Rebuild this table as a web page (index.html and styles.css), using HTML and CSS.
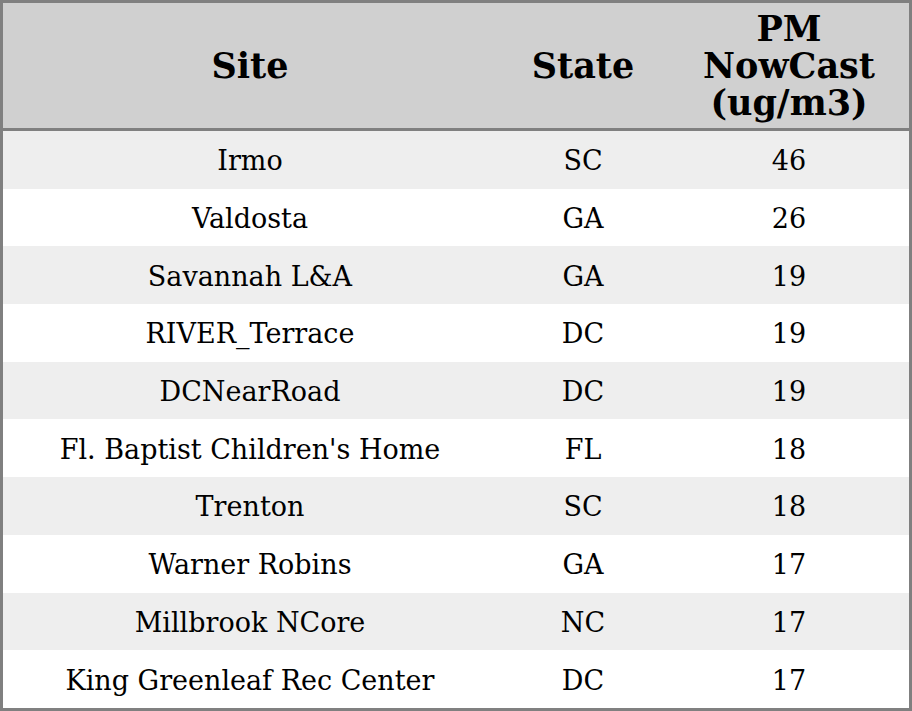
FILE: index.html
```html
<!DOCTYPE html>
<html>
<head>
<meta charset="utf-8">
<link rel="stylesheet" href="styles.css">
</head>
<body>
<table class="aq-table">
  <thead>
    <tr>
      <th class="col-site">Site</th>
      <th class="col-state">State</th>
      <th class="col-pm">PM<br>NowCast<br>(ug/m3)</th>
    </tr>
  </thead>
  <tbody>
    <tr><td>Irmo</td><td>SC</td><td>46</td></tr>
    <tr><td>Valdosta</td><td>GA</td><td>26</td></tr>
    <tr><td>Savannah L&amp;A</td><td>GA</td><td>19</td></tr>
    <tr><td>RIVER_Terrace</td><td>DC</td><td>19</td></tr>
    <tr><td>DCNearRoad</td><td>DC</td><td>19</td></tr>
    <tr><td>Fl. Baptist Children's Home</td><td>FL</td><td>18</td></tr>
    <tr><td>Trenton</td><td>SC</td><td>18</td></tr>
    <tr><td>Warner Robins</td><td>GA</td><td>17</td></tr>
    <tr><td>Millbrook NCore</td><td>NC</td><td>17</td></tr>
    <tr><td>King Greenleaf Rec Center</td><td>DC</td><td>17</td></tr>
  </tbody>
</table>
</body>
</html>
```
FILE: styles.css
```css
html, body {
  margin: 0;
  padding: 0;
  background: #ffffff;
}

.aq-table {
  width: 912px;
  border-collapse: separate;
  border-spacing: 0;
  border: 3px solid #808080;
  font-family: "DejaVu Serif", serif;
  color: #000000;
  table-layout: fixed;
}

.aq-table th {
  background: #d0d0d0;
  font-size: 35px;
  font-weight: bold;
  line-height: 37px;
  height: 128px;
  padding: 0;
  text-align: center;
  vertical-align: middle;
  border-bottom: 3px solid #808080;
  box-sizing: border-box;
}

.aq-table th.col-site { width: 494px; }
.aq-table th.col-state { width: 172px; }
.aq-table th.col-pm { width: 240px; }

.aq-table td {
  font-size: 27px;
  line-height: 30px;
  height: 57.7px;
  padding: 3px 0 0;
  text-align: center;
  vertical-align: middle;
  box-sizing: border-box;
}

.aq-table tbody tr:nth-child(odd) td {
  background: #eeeeee;
}
```
